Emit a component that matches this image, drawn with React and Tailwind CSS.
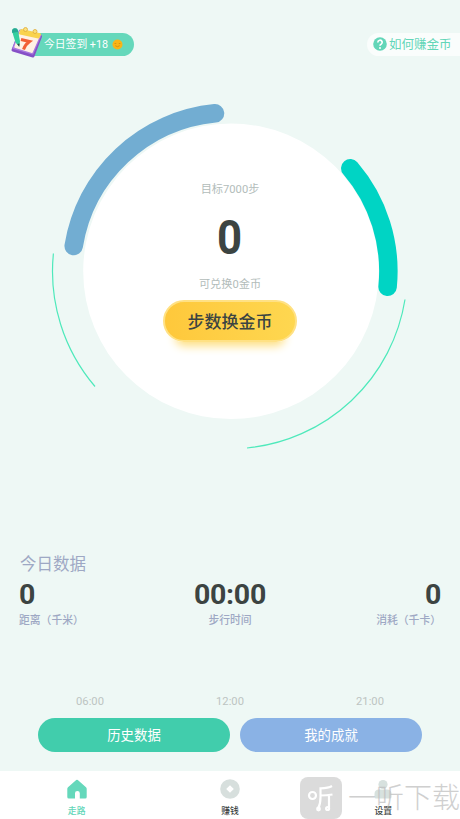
const stats = [
  { label: "距离（千米）", value: "0", align: "items-start" },
  { label: "步行时间", value: "00:00", align: "items-center" },
  { label: "消耗（千卡）", value: "0", align: "items-end" },
];

const hours = ["06:00", "12:00", "21:00"];

function CalendarIcon() {
  return (
    <svg width="35" height="36" viewBox="0 0 35 36" className="shrink-0" strokeLinejoin="round">
      <path d="M11 8l20.500 4.500-7.500 19.500L4 26z" fill="#8650c6" stroke="#8650c6" strokeWidth="3" />
      <path d="M11 6.500l20.500 4.500-8 18.500L4.500 24z" fill="#b58be6" stroke="#a878df" strokeWidth="2" />
      <path d="M11.500 7l19 4.300-7.500 17L6 23z" fill="#fff1e4" stroke="#fff1e4" strokeWidth="1.5" />
      <path d="M12.500 6l18.500 4.300-1.600 3.200-18.400-4z" fill="#f9d34e" stroke="#f9d34e" strokeWidth="2" />
      <circle cx="16.500" cy="5.500" r="2" fill="#fbe07a" stroke="#deab38" strokeWidth=".8" />
      <circle cx="26" cy="7.500" r="2" fill="#fbe07a" stroke="#deab38" strokeWidth=".8" />
      <path d="M12 15.500l8.500 2q-4.500 3.200-6 8" fill="none" stroke="#f25f36" strokeWidth="3" strokeLinejoin="miter" />
      <path d="M3 7q.2-2.600 3-2.800 2.400 0 3 2.300l2 11-.8 5.200-3.700-4.200z" fill="#35cf9f" />
      <path d="M3 7q.2-2.600 3-2.800 2.400 0 3 2.300l.2 1.300-6 1.100z" fill="#28a893" />
      <path d="M8.200 20l2 2.700.5-3.100z" fill="#3c4644" />
    </svg>
  );
}

function SmileCoin() {
  return (
    <svg width="11" height="11" viewBox="0 0 11 11" className="mt-[6px] ml-[4px]">
      <circle cx="5.5" cy="5.5" r="5" fill="#f9b418" />
      <path d="M2.6 4.5h1.6M6.8 4.5h1.6M3.3 6.7q2.2 2 4.4 0" fill="none" stroke="#c9850c" strokeWidth=".7" />
    </svg>
  );
}

function Header() {
  return (
    <header className="flex h-[90px] items-start justify-between pt-[33px]">
      <div className="ml-3 flex h-[23px] w-[122px] items-start rounded-full bg-linear-to-r from-transparent from-15% to-[#65d8bb] to-15% text-[10.8px] text-white">
        <div className="-mt-[9px] -ml-[3px]">
          <CalendarIcon />
        </div>
        <span className="leading-[24px] whitespace-nowrap">今日签到 +18</span>
        <SmileCoin />
      </div>
      <div className="flex h-[23px] w-[93px] items-start rounded-l-full bg-[#fafdfc] pl-[6px] text-[12.5px] text-[#62d6b8]">
        <svg width="14" height="14" viewBox="0 0 14 14" className="mt-[4px] mr-[2px] shrink-0">
          <circle cx="7" cy="7" r="6.8" fill="#62d6b8" />
          <path d="M4.800 5.400a2.200 2.200 0 1 1 3.300 1.900q-1.100.6-1.100 1.500" fill="none" stroke="#fff" strokeWidth="1.700" />
          <circle cx="7" cy="10.900" r="1" fill="#fff" />
        </svg>
        <span className="leading-[24px] whitespace-nowrap">如何赚金币</span>
      </div>
    </header>
  );
}

function StepRing() {
  return (
    <section className="grid h-[370px]">
      <svg width="460" height="370" viewBox="0 90 460 370" className="col-start-1 row-start-1" fill="none">
        <circle cx="231" cy="271.3" r="147.8" fill="#fff" />
        <path d="M73.7 246A159 159 0 0 1 215 113.3" stroke="#72add2" strokeWidth="18.5" strokeLinecap="round" />
        <path d="M350.3 168.3A158 158 0 0 1 387.6 286.8" stroke="#00d4c4" strokeWidth="18.5" strokeLinecap="round" />
        <path d="M53.4 253.5A177.4 177.4 0 0 0 95 386.5" stroke="#4ee9bb" strokeWidth="1.2" />
        <path d="M405 299.5A177.4 177.4 0 0 1 247 448" stroke="#4ee9bb" strokeWidth="1.2" />
      </svg>
      <div className="z-10 col-start-1 row-start-1 flex flex-col items-center pt-[91px] text-[11.2px] text-[#b2bcba]">
        <p className="h-[18px] leading-[18px]">目标7000步</p>
        <p className="mt-[14px] h-[50px] scale-x-92 text-[47.5px] leading-[50px] font-bold text-[#3c4442]">0</p>
        <p className="mt-[12px] h-[18px] leading-[19px]">可兑换0金币</p>
        <button className="mt-[7px] h-[42px] w-[134px] rounded-full border-2 border-[#ffe184] bg-linear-to-r from-[#fec83b] to-[#fed750] pt-[3px] text-[17px] font-medium text-[#3c4442] shadow-[0_16px_10px_-12px_#fedf80]">
          步数换金币
        </button>
      </div>
    </section>
  );
}

function TodayStats() {
  return (
    <section className="h-[231px] px-5 pt-[92px]">
      <h2 className="h-6 text-[16.500px] leading-[25px] text-[#9ea8c4]">今日数据</h2>
      <div className="-mx-px grid grid-cols-3">
        {stats.map((item) => (
          <div key={item.label} className={`flex flex-col ${item.align}`}>
            <span className="h-9 text-[28.500px] leading-[38px] font-bold tracking-[-0.3px] text-[#3c4442]">{item.value}</span>
            <span className="h-4 text-[10.8px] leading-[18px] font-medium text-[#9ea8c4]">{item.label}</span>
          </div>
        ))}
      </div>
      <div className="mt-[66px] flex justify-around text-[11.2px] leading-4 text-[#bdc4c2]">
        {hours.map((hour) => (
          <span key={hour}>{hour}</span>
        ))}
      </div>
    </section>
  );
}

function Tab({ label, active, children }) {
  return (
    <div className={`flex flex-1 flex-col items-center pt-[7px] text-[8.8px] ${active ? "text-[#62d6b8]" : "text-[#3c4442]"}`}>
      <svg width="22" height="22" viewBox="0 0 22 22">
        {children}
      </svg>
      <span className="mt-[5px] leading-[13px] font-medium">{label}</span>
    </div>
  );
}

function TabBar() {
  return (
    <nav className="flex h-12 bg-white">
      <Tab label="走路" active>
        <path
          d="M10.2 2q.8-.7 1.6 0l8.2 7.2q.7.6.7 1.5v8.3q0 1.5-1.5 1.5h-5.4v-5.2q0-2.4-2.4-2.4T9 15.3v5.2H2.8q-1.5 0-1.5-1.5v-8.3q0-.9.7-1.5z"
          fill="#65d8bb"
        />
      </Tab>
      <Tab label="赚钱">
        <circle cx="11" cy="11" r="9.8" fill="#d7dfdd" />
        <path d="M11 7.2l3.8 3.8-3.8 3.8L7.2 11z" fill="#fff" />
      </Tab>
      <Tab label="设置">
        <circle cx="11" cy="6.5" r="4.6" fill="#d7e1de" />
        <path d="M2.5 19v-3q0-4.5 4.5-4.5h8q4.5 0 4.5 4.5v3q0 1.500-1.500 1.500H4q-1.500 0-1.500-1.500z" fill="#d7e1de" />
      </Tab>
    </nav>
  );
}

function Watermark() {
  return (
    <div className="pointer-events-none absolute top-[777px] left-[300px] flex items-start opacity-70">
      <svg width="42" height="42" viewBox="0 0 42 42" fill="none" stroke="#fff" strokeWidth="2.2">
        <rect width="42" height="42" rx="8" fill="#ccc" stroke="none" />
        <circle cx="12.5" cy="18.5" r="3.5" />
        <path d="M32 9q-3.500 2.300-11.500 2.300v9q0 7-2.500 11.500M20.500 18.500q6 0 12-1M29 18v12.500" />
        <circle cx="18.500" cy="32" r="1.3" />
        <circle cx="27.600" cy="31.500" r="1.5" />
      </svg>
      <span className="ml-[6px] text-[28px] leading-[44px] font-light whitespace-nowrap text-[#bcbcbc]">一听下载</span>
    </div>
  );
}

export default function App() {
  return (
    <div className="relative h-[819px] w-[460px] overflow-hidden bg-[#eef8f5] font-[Roboto,'Noto_Sans_CJK_SC',sans-serif]">
      <Header />
      <StepRing />
      <TodayStats />
      <div className="flex h-20 items-start gap-[10px] pt-[27px] pl-[38px] text-[13.4px] text-white">
        <button className="h-[34px] w-[192px] rounded-full bg-[#41cdac] pt-[3px]">历史数据</button>
        <button className="h-[34px] w-[182px] rounded-full bg-[#8ab2e5] pt-[3px]">我的成就</button>
      </div>
      <TabBar />
      <Watermark />
    </div>
  );
}
